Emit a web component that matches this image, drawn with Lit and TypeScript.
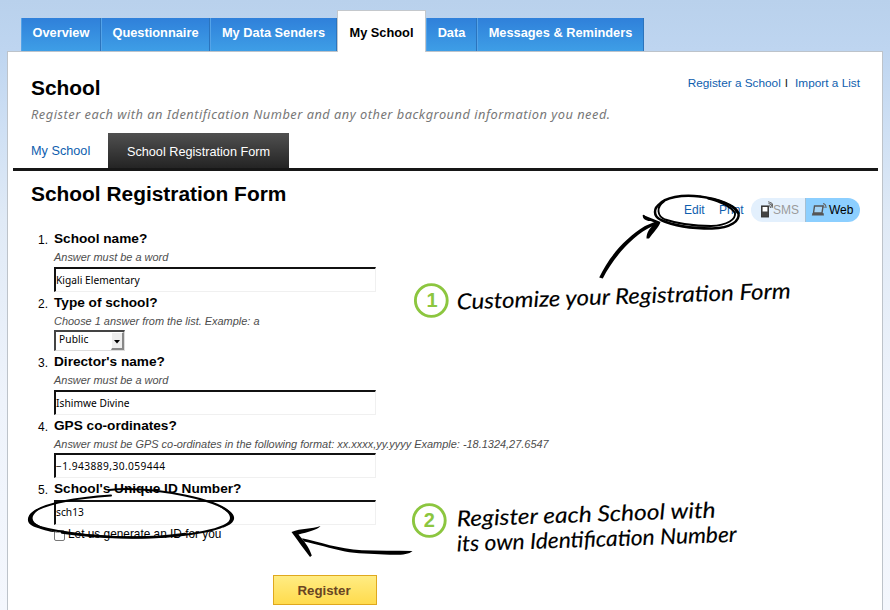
import { LitElement, html, css, svg, nothing } from "lit";
import { customElement } from "lit/decorators.js";
import { classMap } from "lit/directives/class-map.js";

interface Tab { label: string; width: number; active?: boolean }
interface Field {
  label: string;
  hint?: string;
  value: string;
  kind: "text" | "select";
  cls: string;
}

const TABS: Tab[] = [
  { label: "Overview", width: 80 },
  { label: "Questionnaire", width: 109 },
  { label: "My Data Senders", width: 127 },
  { label: "My School", width: 89, active: true },
  { label: "Data", width: 51 },
  { label: "Messages & Reminders", width: 167 },
];

const FIELDS: Field[] = [
  { label: "School name?", hint: "Answer must be a word", value: "Kigali Elementary", kind: "text", cls: "" },
  { label: "Type of school?", hint: "Choose 1 answer from the list. Example: a", value: "Public", kind: "select", cls: "tight" },
  { label: "Director's name?", hint: "Answer must be a word", value: "Ishimwe Divine", kind: "text", cls: "" },
  {
    label: "GPS co-ordinates?",
    hint: "Answer must be GPS co-ordinates in the following format: xx.xxxx,yy.yyyy Example: -18.1324,27.6547",
    value: "−1.943889,30.059444", kind: "text", cls: "tight gps",
  },
  { label: "School's Unique ID Number?", value: "sch13", kind: "text", cls: "id" },
];

@customElement("hand-notes")
class HandNotes extends LitElement {
  static styles = css`
    :host { display: block; pointer-events: none; }
    svg { display: block; }
    .ink { fill: none; stroke: #000; stroke-linecap: round; stroke-linejoin: round; }
    .solid { fill: #000; }
    .ring { fill: none; stroke: #8cc63f; stroke-width: 2.9; }
    .num { font: bold 20px "Liberation Sans", sans-serif; fill: #8cc63f; text-anchor: middle; }
    .hand { font: italic 400 22px Lato, sans-serif; fill: #000; stroke: #000; stroke-width: .15; }
  `;
  private note(x: number, y: number, w: number, angle: number, text: string) {
    return svg`<text class="hand" x=${x} y=${y} textLength=${w} lengthAdjust="spacingAndGlyphs"
      transform="rotate(${angle} ${x} ${y})">${text}</text>`;
  }
  render() {
    return html`<svg width="890" height="610" viewBox="0 0 890 610">
      <!-- ring round Edit -->
      <path class="ink" stroke-width="2.5" d="M661 203C653 208 653 216 661 220C674 226 694 228.500 712 228.500C731 228 740 221 738.500 213C735 205 718 199 700 196.500C682 194.500 665 197 658.500 205"/>
      <path class="ink" stroke-width="1.900" d="M664 201.500C656 207 657 216 665 219.500C680 224.500 698 226 711 226C728 225.500 736 219 735 213C731 207 722 202 708 198.500"/>
      <path class="ink" stroke-width="1.700" d="M700 196.500C719 199 733 205 737.500 213"/>
      <!-- arrow to Edit -->
      <path class="solid" d="M599.200 277.500C609 257 625 238 645 226L655 221.800L650 221C645 220.500 642 218 643 215C649 217.500 655 219.500 660.500 222C659 227 653 233 649 238.500L646.500 238.500C646.500 233 649 229 652 226.500C633 235 613 258 602.800 278.500Z"/>
      <path class="ink" stroke-width="1.500" d="M643.500 215.500Q649 220.500 658 222.500"/>
      <!-- ring round the school ID -->
      <path class="ink" stroke-width="2" d="M109 490C132 487.500 157 490 185 495.500C211 501 232 509 232 518C230 530 186 537 142 537.500C103 538 61 533 40 527C27 522 27 516 35 511C50 502 75 498 111 495.500"/>
      <path class="solid" d="M223 507C238 514 238 523 222 528C235 519 231 513 218 506Z"/>
      <path class="solid" d="M42 507C25 514 23 524 38 528C48 532 55 532 60 533C36 526 27 521 36 512Z"/>
      <path class="ink" stroke-width="2.400" d="M62 532.500C95 537.500 145 540 185 534"/>
      <!-- arrow to the school ID -->
      <path class="solid" d="M291.500 532C301 528 312 529 320.500 526C317 530 308 532 298.500 534.500C304 541 309 547 311.800 555.500L310 557C304 549 298 541 291.500 532Z"/>
      <path class="solid" d="M302 538.300C320 542 338 549 362 550.300C378 551 395 550.500 412.500 551C408 555.500 396 555 384 554.500C372 554 356 553.500 345 551.500C331 548.500 316 544 304 541.500Z"/>
      <circle class="ring" cx="431.300" cy="300.500" r="15.900"/>
      <circle class="ring" cx="429.300" cy="520.500" r="15.900"/>
      <text class="num" x="432" y="307">1</text>
      <text class="num" x="429.300" y="527">2</text>
      ${this.note(457, 309.5, 334, -1.9, "Customize your Registration Form")}
      ${this.note(457, 526.5, 259, -2, "Register each School with")}
      ${this.note(457, 551.5, 280, -2, "its own Identification Number")}
    </svg>`;
  }
}

@customElement("app-root")
class AppRoot extends LitElement {
  static styles = css`
    :host {
      display: block; position: relative; box-sizing: border-box;
      width: 890px; height: 610px; overflow: hidden;
      padding: 10px 7px 0;
      font-family: "Liberation Sans", Arial, sans-serif; color: #000;
      background: linear-gradient(#b9d1ec, #bed5f0 50px, #cfe0f4 130px, #e0eaf6 220px, #eef3fb 400px, #f4f7fd);
    }
    .tabs { display: flex; align-items: flex-end; height: 42px; margin-left: 14px; position: relative; z-index: 1; }
    .tab {
      box-sizing: border-box; height: 33px; margin-bottom: 1px; line-height: 30px; text-align: center;
      font-size: 12.8px; font-weight: bold; color: #fff; white-space: nowrap;
      background: linear-gradient(#2f80da, #3e9ee6); border-right: 1px solid #2b74bd; border-left: 1px solid #54a3e8;
    }
    .tab.active {
      height: 42px; margin: 0; line-height: 44px; color: #000; background: #fff;
      border: 1px solid #c4c8cc; border-bottom: 0;
    }
    .panel { box-sizing: border-box; height: 560px; margin-top: -1px; border: 1px solid #bdc3ca; background: #fff; padding: 0 4px 0 5px; }
    .head { display: flex; justify-content: space-between; padding: 0 18px; }
    h1, h2 { margin: 0; font-size: 20.9px; font-weight: bold; white-space: nowrap; }
    h1 { line-height: 26px; padding: 23px 0 1px; }
    .blue { color: #0e5eae; }
    .links { display: flex; font-size: 11.8px; line-height: 16px; padding-top: 23px; white-space: nowrap; }
    .bar { padding: 0 7px 0 4px; color: #222; }
    .sub { margin: 0 18px; height: 20px; font: italic 12.8px/25px "Noto Sans", sans-serif; color: #777; letter-spacing: .505px; white-space: nowrap; }
    .subtabs { display: flex; height: 35px; margin-top: 11px; border-bottom: 3px solid #171717; font-size: 12.7px; line-height: 38px; }
    .subtab { width: 77px; padding-left: 18px; line-height: 37px; }
    .subtab.on { width: 181px; padding: 0; text-align: center; line-height: 38px; color: #fff; background: linear-gradient(#505050, #242424); }
    .formhead { display: flex; justify-content: space-between; padding: 0 18px; height: 57px; }
    h2 { line-height: 26px; padding-top: 10px; }
    .tools { display: flex; align-items: center; height: 24px; padding-top: 27px; font-size: 12px; }
    .edit { width: 35px; } .print { width: 32px; }
    .pill { display: flex; height: 24px; width: 109px; border-radius: 12px; overflow: hidden; line-height: 25px; }
    .sms, .web { display: flex; box-sizing: border-box; }
    .sms { width: 54px; padding-left: 9px; background: #e3f0fd; color: #9b9b9b; }
    .web { width: 55px; padding-left: 5px; background: #8ccfff; border-left: 1px solid #a6bfd2; }
    .web svg { margin-right: 1px; }
    .field { display: grid; grid-template-columns: 23px 1fr; padding-left: 18px; }
    .no { font-size: 12px; line-height: 25px; padding-left: 7px; height: 20px; }
    .label { font-size: 13.65px; font-weight: bold; line-height: 22px; height: 20px; white-space: nowrap; }
    .hint { font-size: 10.94px; font-style: italic; color: #4d4d4d; line-height: 19px; height: 18px; margin-bottom: 1px; white-space: nowrap; }
    .tight .hint { margin-bottom: 0; }
    .id .label { margin-bottom: 2px; line-height: 21px; }
    .input {
      box-sizing: border-box; width: 322px; height: 25px; padding-left: 0; line-height: 23px; letter-spacing: .03px;
      border: 1px solid #f0f0f0; border-top: 2px solid #111; border-left: 2px solid #111;
      font-family: "Noto Sans", sans-serif; font-size: 10.2px; white-space: nowrap;
    }
    .gps .input { letter-spacing: .43px; }
    .id .input { line-height: 21px; }
    .select {
      box-sizing: border-box; display: flex; justify-content: space-between; width: 71px; height: 21px; padding-left: 3px; line-height: 14px;
      border: 1px solid #ddd; border-top: 2px solid #444; border-left: 2px solid #444;
      font-family: "Noto Sans", sans-serif; font-size: 10.2px; letter-spacing: .1px;
    }
    .drop { box-sizing: border-box; width: 13px; height: 18px; background: #eee; border: 1px solid #fff; border-right: 2px solid #888; border-bottom: 2px solid #888; }
    .drop svg { display: block; }
    .check { display: flex; align-items: center; height: 19px; padding-left: 41px; font-size: 11.85px; line-height: 17px; }
    .box { box-sizing: border-box; width: 11px; height: 11px; margin: 1px 3px 0 0; border: 1px solid #777; border-radius: 2px; background: #fff; }
    .btn {
      display: block; box-sizing: border-box; width: 104px; height: 30px; margin: 31px 0 0 260px; padding: 0 2px 0 0;
      border: 1px solid #dfa81e; background: linear-gradient(#ffec83, #ffdb4d); color: #694523;
      font: bold 13.3px/29px "Liberation Sans", sans-serif; text-align: center;
    }
    .notes { position: absolute; left: 0; top: 0; z-index: 2; }
  `;

  private control(f: Field) {
    return f.kind === "text"
      ? html`<div class="input">${f.value}</div>`
      : html`<div class="select">${f.value}<span class="drop"><svg width="10" height="15"><path d="M2 7h6l-3 3.500z"/></svg></span></div>`;
  }

  render() {
    return html`
      <nav class="tabs">
        ${TABS.map(t => html`<div class=${classMap({ tab: true, active: !!t.active })} style="width:${t.width}px">${t.label}</div>`)}
      </nav>
      <main class="panel">
        <div class="head">
          <h1>School</h1>
          <div class="links"><span class="blue">Register a School</span><span class="bar">I</span><span class="blue">Import a List</span></div>
        </div>
        <p class="sub">Register each with an Identification Number and any other background information you need.</p>
        <div class="subtabs">
          <div class="subtab blue">My School</div>
          <div class="subtab on">School Registration Form</div>
        </div>
        <div class="formhead">
          <h2>School Registration Form</h2>
          <div class="tools">
            <span class="edit blue">Edit</span><span class="print blue">Print</span>
            <div class="pill">
              <div class="sms">
                <svg width="13" height="24" viewBox="0 0 13 24"><rect x="1.800" y="8.200" width="6.400" height="10.500" fill="#fff" stroke="#333" stroke-width="1.500"/><path d="M2 13.500h6v5H2z" fill="#444"/><path d="M9 7.500q1.500 .500 1.500 2.500M8.500 5.500q3.700 .500 3.700 4.500M8 3.800q5 .500 5 5" fill="none" stroke="#666" stroke-width="1.100"/></svg>SMS
              </div>
              <div class="web">
                <svg width="17" height="24" viewBox="0 0 17 24"><path d="M3.500 8h8.500l-1 7h-8.500z" fill="#a6d4f5" stroke="#555" stroke-width="1.400"/><path d="M1.500 15h11l.5 2.500H.8z" fill="#555"/><path d="M12 5.500q3 .500 3 4.500M11.500 7.500q1.500 .300 1.600 2.500" fill="none" stroke="#666" stroke-width="1.200"/></svg>Web
              </div>
            </div>
          </div>
        </div>
        ${FIELDS.map((f, i) => html`
          <div class="field ${f.cls}">
            <div class="no">${i + 1}.</div>
            <div>
              <div class="label">${f.label}</div>
              ${f.hint ? html`<div class="hint">${f.hint}</div>` : nothing}
              ${this.control(f)}
            </div>
          </div>`)}
        <div class="check"><span class="box"></span>Let us generate an ID for you</div>
        <button class="btn">Register</button>
      </main>
      <hand-notes class="notes"></hand-notes>
    `;
  }
}
